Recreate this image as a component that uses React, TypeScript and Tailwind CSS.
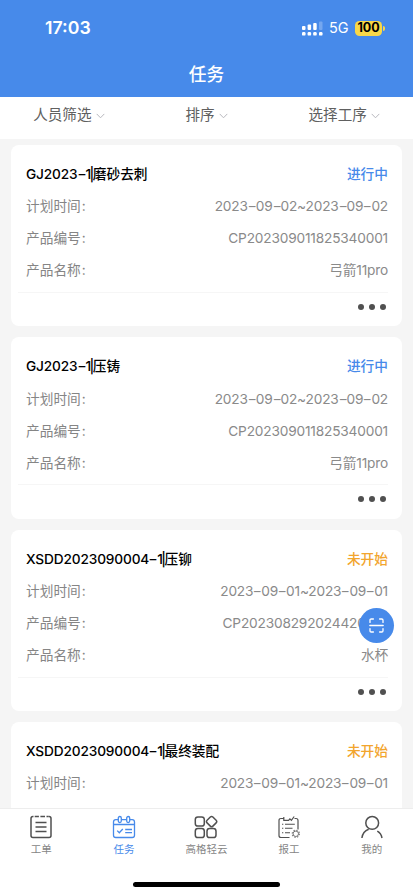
import { Fragment, type ReactNode } from "react";

type Task = {
  title: string;
  process: string;
  status: string;
  active: boolean;
  time: string;
  code: string;
  name: string;
};

const tasks: Task[] = [
  { title: "GJ2023-1", process: "磨砂去刺", status: "进行中", active: true, time: "2023-09-02~2023-09-02", code: "CP202309011825340001", name: "弓箭11pro" },
  { title: "GJ2023-1", process: "压铸", status: "进行中", active: true, time: "2023-09-02~2023-09-02", code: "CP202309011825340001", name: "弓箭11pro" },
  { title: "XSDD2023090004-1", process: "压铆", status: "未开始", active: false, time: "2023-09-01~2023-09-01", code: "CP202308292024420001", name: "水杯" },
  { title: "XSDD2023090004-1", process: "最终装配", status: "未开始", active: false, time: "2023-09-01~2023-09-01", code: "CP202308292024420002", name: "水杯" },
];

function Dashed({ text }: { text: string }) {
  return (
    <>
      {text.split("-").map((part, i) => (
        <Fragment key={i}>
          {i > 0 && <span className="inline-block w-[8px] scale-x-150 text-center">-</span>}
          {part}
        </Fragment>
      ))}
    </>
  );
}

function Row({ label, value }: { label: string; value: string }) {
  return (
    <div className="flex h-8 items-center justify-between text-[13.7px] text-[#858585]">
      <span>{label}<span className="ml-[1px]">:</span></span>
      <span className="tracking-[-0.18px] text-[#8a8a8a]"><Dashed text={value} /></span>
    </div>
  );
}

function Card({ task }: { task: Task }) {
  return (
    <div className="h-[181.4px] shrink-0 rounded-[8px] bg-white pt-[13px] pr-[14px] pl-[15px]">
      <div className="flex h-[32.4px] items-center justify-between text-[13.7px] font-medium">
        <span className="text-black">
          <span className="tracking-[-0.15px]"><Dashed text={task.title} /></span>
          <span className="-mx-[1.5px]">|</span>
          {task.process}
        </span>
        <span className={task.active ? "text-[#478aea]" : "text-[#f2a52e]"}>{task.status}</span>
      </div>
      <Row label="计划时间" value={task.time} />
      <Row label="产品编号" value={task.code} />
      <Row label="产品名称" value={task.name} />
      <div className="mt-[5.600px] -ml-2 flex h-[29px] items-center justify-end gap-[5px] border-t border-[#f6f6f6] pr-[2px]">
        <i className="size-[6px] rounded-full bg-[#505050]" />
        <i className="size-[6px] rounded-full bg-[#505050]" />
        <i className="size-[6px] rounded-full bg-[#505050]" />
      </div>
    </div>
  );
}

function Filter({ label }: { label: string }) {
  return (
    <div className="flex items-center gap-[4px]">
      <span>{label}</span>
      <svg className="mt-[2px]" width="9" height="6" viewBox="0 0 9 6" fill="none" stroke="#b8b8be" strokeWidth="1"><path d="M.7.9 4.5 4.8 8.3.9" /></svg>
    </div>
  );
}

function Tab({ label, active, children }: { label: string; active?: boolean; children: ReactNode }) {
  return (
    <div className={`flex flex-1 flex-col items-center pt-[6px] ${active ? "text-[#478aea]" : "text-[#505050]"}`}>
      <svg width="24" height="24" viewBox="0 0 24 24" fill="none" stroke="currentColor" strokeWidth="1.3">{children}</svg>
      <span className={`mt-[2.500px] text-[10.5px] leading-[16px] ${active ? "" : "text-[#858585]"}`}>{label}</span>
    </div>
  );
}

export default function App() {
  return (
    <div className="relative flex h-[896px] w-full flex-col overflow-hidden bg-[#f5f5f5] font-['Inter','Noto_Sans_CJK_SC',sans-serif]">
      <header className="h-[97px] shrink-0 bg-[#478aea] text-white">
        <div className="flex h-[56px] items-center justify-between pr-[27px] pl-[45px]">
          <span className="text-[17.7px] font-semibold">17:03</span>
          <div className="flex items-center">
            <svg width="21" height="15" viewBox="0 0 21 15" fill="white">
              <rect x="0" y="5" width="3.5" height="4" rx="1" />
              <rect x="5.6" y="3.5" width="3.5" height="5.5" rx="1" />
              <rect x="11.2" y="2" width="3.5" height="7" rx="1" />
              <rect x="17" y=".5" width="3.5" height="8.5" rx="1" opacity=".25" />
              <rect x="0" y="11" width="3.5" height="3.6" rx="1.2" />
              <rect x="5.6" y="11" width="3.5" height="3.6" rx="1.2" />
              <rect x="11.2" y="11" width="3.5" height="3.6" rx="1.2" />
              <rect x="17" y="11" width="3.5" height="3.6" rx="1.2" />
            </svg>
            <span className="ml-[6px] w-[20px] text-[14.5px] leading-[16px]">5G</span>
            <span className="ml-[6px] flex h-[15px] w-[27px] items-center justify-center rounded-[4.5px] bg-[#f9d848] text-[12.5px] font-bold text-black">100</span>
            <i className="mr-px ml-px h-[5px] w-[2px] rounded-r-full bg-[#f9d848]" />
          </div>
        </div>
        <h1 className="pt-px text-center text-[17.7px] leading-[36px] font-medium">任务</h1>
      </header>
      <nav className="flex h-[42px] shrink-0 bg-white pb-[5px] text-[14.6px] text-[#606060]">
        <div className="flex flex-1 items-center justify-center"><Filter label="人员筛选" /></div>
        <div className="flex flex-1 items-center justify-center"><Filter label="排序" /></div>
        <div className="flex flex-1 items-center justify-center"><Filter label="选择工序" /></div>
      </nav>
      <main className="flex min-h-0 flex-1 flex-col gap-[11px] overflow-hidden px-[11px] pt-[6px]">
        {tasks.map((task) => <Card key={task.title + task.process} task={task} />)}
      </main>
      <button className="absolute top-[608px] left-[358.5px] flex size-[35px] items-center justify-center rounded-full bg-[#478aea]">
        <svg width="15" height="15" viewBox="0 0 15 15" fill="none" stroke="white" strokeWidth="1.3" strokeLinecap="round">
          <path d="M1 4.4V2.2Q1 1 2.200 1H4.400M10.600 1h2.200Q14 1 14 2.200v2.200M14 10.600v2.200q0 1.200-1.200 1.200h-2.200M4.400 14H2.200Q1 14 1 12.800v-2.200M.8 7.500h13.400" />
        </svg>
      </button>
      <footer className="flex h-[88px] shrink-0 flex-col border-t border-[#ededed] bg-white">
        <div className="flex h-[72px]">
          <Tab label="工单">
            <path d="M4.500 1.500H4Q2 1.500 2 3.500v17q0 2 2 2h16q2 0 2-2v-17q0-2-2-2h-.5M5.700 1.500h4.200M11.400 1.500h4.600M17.500 1.500h1.800M6.500 7.500h11M6.500 12h11M6.500 16.500h11" strokeWidth="1.500" />
          </Tab>
          <Tab label="任务" active>
            <path d="M6.300 4.600H3.800q-2.300 0-2.300 2.300v13.300q0 2.300 2.300 2.300h16.400q2.300 0 2.300-2.300V6.900q0-2.300-2.300-2.300h-2.500M9.300 4.600h5.400M1.500 9.500h21" />
            <rect x="6.300" y="1.500" width="3" height="6" rx="1.500" />
            <rect x="14.700" y="1.500" width="3" height="6" rx="1.500" />
            <path d="m5.200 15.600 2.100 2.100 3.500-3.700M13.200 14.500h6.800M13.200 17.700h6.800" />
          </Tab>
          <Tab label="高格轻云">
            <rect x="1.300" y="2" width="9" height="9" rx="2.600" strokeWidth="1.500" />
            <rect x="1.300" y="13.600" width="9" height="9" rx="2.600" strokeWidth="1.500" />
            <rect x="13" y="13.600" width="9" height="9" rx="2.600" strokeWidth="1.500" />
            <rect x="13.500" y="2.500" width="8.200" height="8.200" rx="1.800" transform="rotate(45 17.600 6.600)" strokeWidth="1.500" />
          </Tab>
          <Tab label="报工">
            <path d="M6.800 3.500H4Q2 3.500 2 5.500v15q0 2 2 2h8.500M6.800 2v3.300h4.800l1.300-1.500 1.500 1.500 2.800-3.800M17.500 3.500H19q2 0 2 2v9" strokeWidth="1.200" />
            <path d="M5 9.200h1.300M8 9.200h9.800M5 13.300h1.300M8 13.300h7.500M5 17.800h1.300M8 17.800h5" strokeWidth="1.100" />
            <circle cx="18.800" cy="18.800" r="2.700" strokeWidth="1" opacity=".75" />
            <circle cx="18.800" cy="18.800" r="3.600" strokeWidth="1.200" strokeDasharray="1.400 1.430" opacity=".75" />
          </Tab>
          <Tab label="我的">
            <circle cx="12.200" cy="7.900" r="6.400" strokeWidth="1.500" />
            <path d="M1.900 23q.8-6.600 6.800-8.800M17.300 16.200q3.900 2.200 4.700 6.800" strokeWidth="1.500" />
          </Tab>
        </div>
        <div className="mx-auto mt-px h-[5px] w-[147px] shrink-0 rounded-full bg-black" />
      </footer>
    </div>
  );
}
